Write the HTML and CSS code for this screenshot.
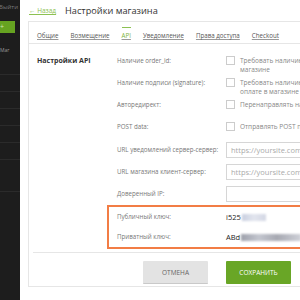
FILE: index.html
```html
<!DOCTYPE html>
<html lang="ru">
<head>
    <meta charset="UTF-8">
    <title>Настройки магазина</title>
    <link rel="stylesheet" href="styles.css">
</head>
<body>
<div class="page">
    <div class="side">
        <div class="side-exit"><span>Выйти</span></div>
        <div class="side-btn">+</div>
        <div class="side-label">Маг</div>
        <ul class="side-menu">
            <li></li><li></li><li></li><li></li><li></li><li></li><li></li>
        </ul>
    </div>
    <div class="main">
        <div class="head">
            <a class="back" href="#">&larr; Назад</a>
            <h1 class="title">Настройки магазина</h1>
        </div>
        <div class="card">
            <ul class="tabs">
                <li><a href="#">Общие</a></li>
                <li><a href="#">Возмещение</a></li>
                <li class="active"><a href="#">API</a></li>
                <li><a href="#">Уведомление</a></li>
                <li><a href="#">Права доступа</a></li>
                <li><a href="#">Checkout</a></li>
            </ul>
            <div class="card-body">
                <h2 class="section">Настройки API</h2>
                <div class="form">
                    <div class="row">
                        <div class="label">Наличие order_id:</div>
                        <label class="check"><span class="box"></span><span>Требовать наличие order_id при оплате в<br>магазине</span></label>
                    </div>
                    <div class="row">
                        <div class="label">Наличие подписи (signature):</div>
                        <label class="check"><span class="box"></span><span>Требовать наличие подписи при<br>оплате в магазине</span></label>
                    </div>
                    <div class="row">
                        <div class="label">Авторедирект:</div>
                        <label class="check"><span class="box"></span><span>Перенаправлять на сайт магазина</span></label>
                    </div>
                    <div class="row">
                        <div class="label">POST data:</div>
                        <label class="check"><span class="box"></span><span>Отправлять POST параметры</span></label>
                    </div>
                    <div class="row row-input">
                        <div class="label">URL уведомлений сервер-сервер:</div>
                        <input class="field" type="text" placeholder="https://yoursite.com/api/callback">
                    </div>
                    <div class="row row-input">
                        <div class="label">URL магазина клиент-сервер:</div>
                        <input class="field" type="text" placeholder="https://yoursite.com/result">
                    </div>
                    <div class="row row-input">
                        <div class="label">Доверенный IP:</div>
                        <input class="field" type="text">
                    </div>
                    <div class="keys">
                        <div class="row row-key">
                            <div class="label">Публичный ключ:</div>
                            <div class="key">i525<span class="blur short"></span></div>
                        </div>
                        <div class="row row-key">
                            <div class="label">Приватный ключ:</div>
                            <div class="key">ABd<span class="blur long"></span></div>
                        </div>
                    </div>
                </div>
            </div>
            <div class="actions">
                <button class="btn btn-cancel">Отмена</button>
                <button class="btn btn-save">Сохранить</button>
            </div>
        </div>
    </div>
</div>
</body>
</html>
```

FILE: styles.css
```css
html, body{
    margin: 0;
    padding: 0;
    width: 300px;
    height: 300px;
    overflow: hidden;
    background-color: #fff;
    font-family: "Open Sans", "Liberation Sans", sans-serif;
}

ul, li{
    margin: 0;
    padding: 0;
    list-style: none;
}

.page{
    display: flex;
    height: 300px;
}

/* левая панель */
.side{
    flex: 0 0 20px;
    background-color: #1d1d1d;
    overflow: hidden;
}

.side-exit{
    display: flex;
    justify-content: flex-end;
    padding-right: 2px;
    height: 15px;
    line-height: 15px;
    font-size: 6px;
    color: #7a7a7a;
    white-space: nowrap;
}

.side-btn{
    margin-top: 6px;
    width: 15px;
    height: 12px;
    line-height: 12px;
    font-size: 7px;
    color: #cfe3b0;
    background-color: #66a321;
}

.side-label{
    margin-top: 13px;
    font-size: 5px;
    line-height: 8px;
    color: #9a9a9a;
    white-space: nowrap;
}

.side-menu{
    margin-top: 4px;
}

.side-menu li{
    height: 16px;
    border-bottom: 1px solid #2b2b2b;
}

.side-menu li:last-child{
    height: 31px;
}

/* контент */
.main{
    flex: 1;
    padding-left: 8px;
    min-width: 0;
}

.head{
    display: flex;
    align-items: center;
    height: 21px;
}

.back{
    margin-left: 1px;
    font-size: 6.5px;
    color: #8cc152;
    text-decoration: underline;
}

.title{
    margin: 0 0 0 9px;
    font-size: 9.2px;
    font-weight: 400;
    color: #333;
}

.card{
    width: 330px;
    height: 266px;
    border: 1px solid #e6e6e6;
    box-sizing: border-box;
}

.tabs{
    display: flex;
    gap: 12px;
    padding: 0 8px;
    height: 21px;
    border-bottom: 1px solid #e6e6e6;
}

.tabs li{
    position: relative;
    padding-top: 9px;
    font-size: 6.2px;
}

.tabs a{
    color: #555;
    text-decoration: underline;
    text-decoration-color: #999;
}

.tabs .active a{
    color: #7cb342;
}

.tabs .active::before{
    content: "";
    position: absolute;
    left: 0;
    right: 0;
    top: 5px;
    height: 1px;
    background-color: #8cc152;
}

.card-body{
    display: flex;
    padding-top: 7px;
}

.section{
    flex: 0 0 80px;
    margin: 0;
    padding: 5px 0 0 8px;
    font-size: 7px;
    font-weight: 700;
    color: #333;
}

.form{
    flex: 1;
}

.row{
    display: flex;
    align-items: flex-start;
    height: 22px;
    box-sizing: border-box;
    padding-top: 6px;
    font-size: 6.2px;
    line-height: 8.5px;
}

.label{
    flex: 0 0 109px;
    color: #777;
}

.check{
    display: flex;
    align-items: flex-start;
    gap: 5px;
    white-space: nowrap;
    font-size: 6.5px;
    color: #888;
}

.box{
    flex: 0 0 9px;
    height: 9px;
    margin-top: -1px;
    border: 1px solid #ccc;
    box-sizing: border-box;
    background-color: #fff;
}

.row-input{
    align-items: center;
    padding-top: 0;
}

.field{
    width: 110px;
    height: 16px;
    padding: 0 4px;
    box-sizing: border-box;
    border: 1px solid #d6d6d6;
    font-family: inherit;
    font-size: 7.5px;
    color: #333;
}

.field::placeholder{
    color: #aaa;
}

.keys{
    margin-left: -10px;
    padding-left: 8px;
    width: 184px;
    border: 2px solid #f27d45;
    border-right: 0;
}

.row-key{
    height: 20px;
    padding-top: 6px;
}

.key{
    display: flex;
    align-items: center;
    font-size: 7.5px;
    color: #222;
}

.blur{
    display: inline-block;
    height: 7px;
    margin-left: 1px;
    filter: blur(1.2px);
}

.blur.short{
    width: 24px;
    background: linear-gradient(90deg, #c9cfe0, #e2e5ee 50%, #d3d7e4);
}

.blur.long{
    width: 60px;
    background: linear-gradient(90deg, #9ea1ab, #c3c6cf 30%, #a7a9b2 60%, #cfd1d8);
}

.actions{
    display: flex;
    gap: 18px;
    margin: 3px 0 0 4px;
    padding: 8px 0 0 110px;
    border-top: 1px solid #e6e6e6;
}

.btn{
    width: 65px;
    height: 23px;
    border: 0;
    border-radius: 1px;
    font-family: inherit;
    font-size: 6.5px;
    text-transform: uppercase;
    cursor: pointer;
}

.btn-cancel{
    color: #666;
    background-color: #e3e3e3;
    border-bottom: 1px solid #c9c9c9;
}

.btn-save{
    color: #fff;
    background-color: #69a626;
}
```
